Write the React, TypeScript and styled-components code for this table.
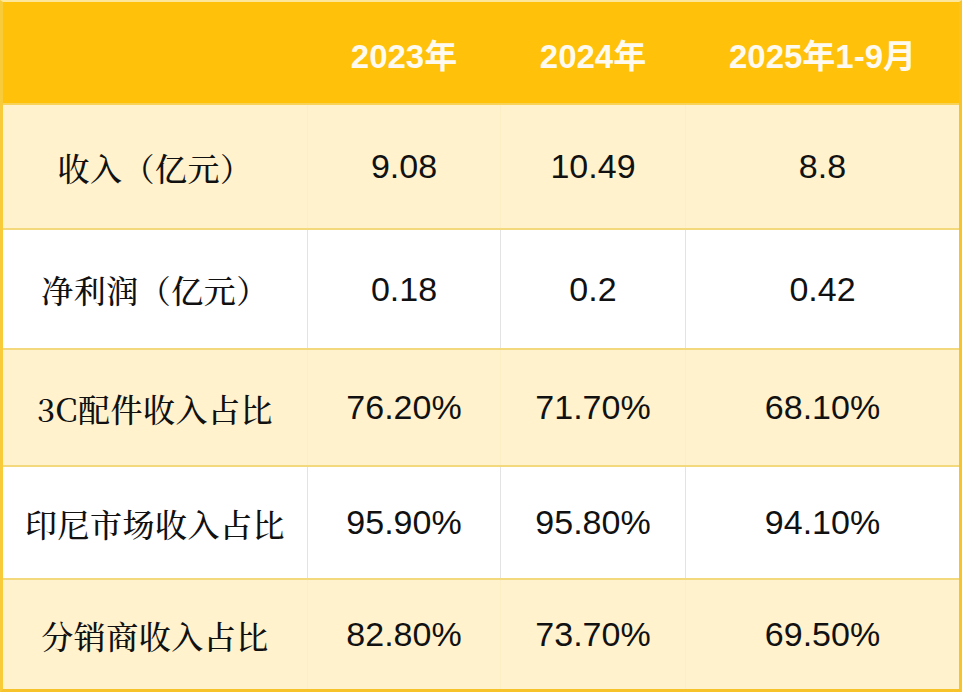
import React from "react";
import styled, { createGlobalStyle } from "styled-components";

const Global = createGlobalStyle`
  html, body { margin: 0; padding: 0; background: #ffffff; }
  * { box-sizing: border-box; }
`;

const Table = styled.div`
  width: 962px;
  height: 692px;
  display: flex;
  flex-direction: column;
  border-top: 2px solid #fde79a;
  border-left: 3px solid #f7cb3a;
  border-right: 3px solid #f6c42a;
  border-bottom: 3px solid #f6c42a;
  background: #fff2cc;
`;

type Tone = "header" | "cream" | "white";

const bg: Record<Tone, string> = {
  header: "#ffc109",
  cream: "#fff2cd",
  white: "#ffffff",
};

const Row = styled.div<{ $tone: Tone; $h: number; $last?: boolean }>`
  display: grid;
  grid-template-columns: 304px 193px 185px 1fr;
  height: ${(p) => p.$h}px;
  flex: none;
  background: ${(p) => bg[p.$tone]};
  border-bottom: ${(p) =>
    p.$last ? "none" : p.$tone === "header" ? "2px solid #f8d35a" : "2px solid #f4d97c"};
`;

const Cell = styled.div<{ $tone: Tone; $first?: boolean }>`
  display: flex;
  align-items: center;
  justify-content: center;
  border-left: ${(p) =>
    p.$first
      ? "none"
      : p.$tone === "white"
      ? "1px solid #e3e3e3"
      : p.$tone === "cream"
      ? "1px solid #fcefc6"
      : "1px solid #ffc109"};
`;

const HeadText = styled.span`
  font-family: "Liberation Sans", Arial, "Noto Sans CJK SC", sans-serif;
  font-weight: 700;
  font-size: 33px;
  color: #fffaf0;
  padding-top: 2px;
`;

const Label = styled.span`
  font-family: "Noto Serif CJK SC", "Noto Sans CJK SC", serif;
  font-size: 32px;
  font-weight: 500;
  color: #111111;
  letter-spacing: 0.5px;
`;

const Num = styled.span`
  font-family: "Liberation Sans", Arial, sans-serif;
  font-size: 34px;
  color: #111111;
`;

const headers = ["2023年", "2024年", "2025年1-9月"];

const rows: { label: string; values: string[]; tone: Tone; h: number }[] = [
  { label: "收入（亿元）", values: ["9.08", "10.49", "8.8"], tone: "cream", h: 125 },
  { label: "净利润（亿元）", values: ["0.18", "0.2", "0.42"], tone: "white", h: 120 },
  { label: "3C配件收入占比", values: ["76.20%", "71.70%", "68.10%"], tone: "cream", h: 117 },
  { label: "印尼市场收入占比", values: ["95.90%", "95.80%", "94.10%"], tone: "white", h: 113 },
  { label: "分销商收入占比", values: ["82.80%", "73.70%", "69.50%"], tone: "cream", h: 109 },
];

export default function App() {
  return (
    <>
      <Global />
      <Table>
        <Row $tone="header" $h={103}>
          <Cell $tone="header" $first />
          {headers.map((h) => (
            <Cell key={h} $tone="header">
              <HeadText>{h}</HeadText>
            </Cell>
          ))}
        </Row>
        {rows.map((r, i) => (
          <Row key={r.label} $tone={r.tone} $h={r.h} $last={i === rows.length - 1}>
            <Cell $tone={r.tone} $first>
              <Label>{r.label}</Label>
            </Cell>
            {r.values.map((v, j) => (
              <Cell key={j} $tone={r.tone}>
                <Num>{v}</Num>
              </Cell>
            ))}
          </Row>
        ))}
      </Table>
    </>
  );
}
